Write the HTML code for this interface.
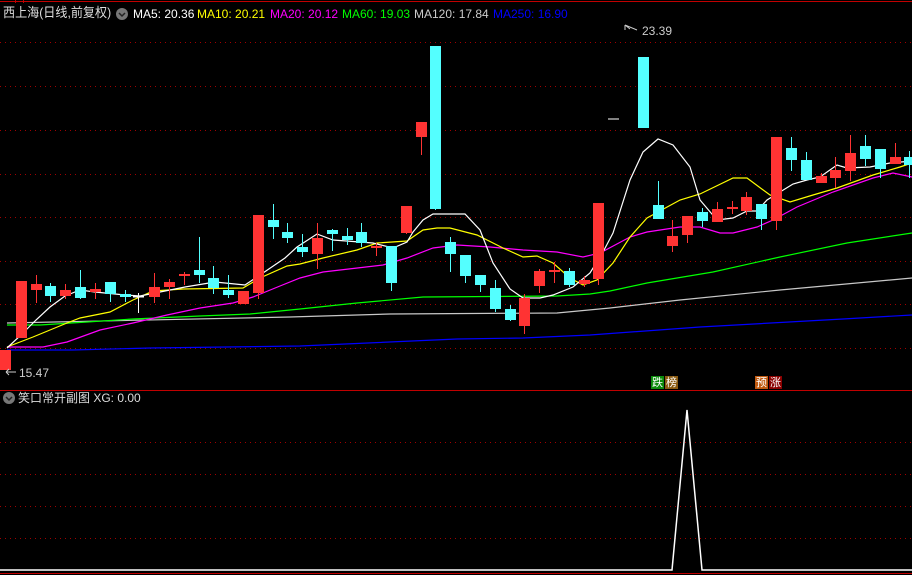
<!DOCTYPE html>
<html><head><meta charset="utf-8">
<style>
html,body{margin:0;padding:0;background:#000;width:912px;height:575px;overflow:hidden}
.t{position:absolute;font-family:"Liberation Sans","Noto Sans CJK SC",sans-serif;font-size:12px;white-space:nowrap;line-height:14px}
.b{position:absolute;width:13px;height:13px;font-family:"Noto Sans CJK SC",sans-serif;font-size:11px;line-height:13px;text-align:center;color:#fff}
</style></head><body>
<svg id="s" width="912" height="575" style="position:absolute;left:0;top:0">
<line x1="0" y1="1.5" x2="912" y2="1.5" stroke="#c00000"/>
<line x1="15.5" y1="0" x2="15.5" y2="3" stroke="#c00000"/>
<line x1="23.5" y1="0" x2="23.5" y2="3" stroke="#c00000"/>
<line x1="0" y1="390.5" x2="912" y2="390.5" stroke="#c00000"/>
<line x1="0" y1="573.5" x2="912" y2="573.5" stroke="#c00000"/>
<g id="grid" stroke="#a00000" stroke-dasharray="1,4"></g>
<g id="ma" fill="none" stroke-width="1.2"></g>
<g id="c"></g>
<circle cx="122" cy="14" r="6" fill="#777"/>
<path d="M119 13l3 3 3-3" stroke="#222" stroke-width="1.5" fill="none"/>
<circle cx="9" cy="398" r="6" fill="#777"/>
<path d="M6 397l3 3 3-3" stroke="#222" stroke-width="1.5" fill="none"/>
<polyline points="0,570 672,570 687,410 702,570 912,570" fill="none" stroke="#fff" stroke-width="1.5"/>
<line x1="608" y1="119" x2="619" y2="119" stroke="#fff"/>
<path d="M625 25l5 4M625 25l0 5M625 25l12 5" stroke="#ccc" fill="none"/>
<path d="M6 372l10 0M6 372l3-3M6 372l3 3" stroke="#ccc" fill="none"/>
</svg>
<div class="t" style="left:3px;top:6px;color:#ddd;font-size:13px;transform:scaleX(0.93);transform-origin:0 0">西上海(日线,前复权)</div>
<div class="t" style="left:133px;top:7px;color:#fff">MA5: 20.36</div>
<div class="t" style="left:197px;top:7px;color:#ffff00">MA10: 20.21</div>
<div class="t" style="left:270px;top:7px;color:#ff00ff">MA20: 20.12</div>
<div class="t" style="left:342px;top:7px;color:#00ff00">MA60: 19.03</div>
<div class="t" style="left:414px;top:7px;color:#ccc">MA120: 17.84</div>
<div class="t" style="left:493px;top:7px;color:#0000ff">MA250: 16.90</div>
<div class="t" style="left:642px;top:24px;color:#ccc">23.39</div>
<div class="t" style="left:19px;top:366px;color:#ccc">15.47</div>
<div class="t" style="left:18px;top:391px;color:#ddd;font-size:12px">笑口常开副图 <span style="font-size:12px">XG: 0.00</span></div>
<div class="b" style="left:651px;top:376px;background:#0a8a0a">跌</div>
<div class="b" style="left:665px;top:376px;background:#8a5a10">榜</div>
<div class="b" style="left:755px;top:376px;background:#c05a10">预</div>
<div class="b" style="left:769px;top:376px;background:#8a0000">涨</div>
<script>
var NS="http://www.w3.org/2000/svg";
function el(p,t,a){var e=document.createElementNS(NS,t);for(var k in a)e.setAttribute(k,a[k]);p.appendChild(e);return e;}
var g=document.getElementById("grid");
[42,86,130,174,217,261,304,348,442,474,506,538].forEach(function(y){el(g,"line",{x1:0,x2:912,y1:y+.5,y2:y+.5});});
var R="#ff3333",C="#54ffff",W="#fff";
var d=[[0,350,370,350,370,R],[16,281,338,281,338,R],[31,284,290,275,303,R],[45,286,296,283,302,C],[60,290,296,284,299,R],[75,287,298,270,299,C],[90,289,292,283,299,R],[105,282,294,282,302,C],[120,294,297,290,302,C],[133,296,297,293,313,W],[149,287,297,273,303,R],[164,282,287,279,299,R],[179,274,276,272,285,R],[194,270,275,237,283,C],[208,278,288,266,294,C],[223,290,295,275,298,C],[238,291,304,291,304,R],[253,215,293,215,299,R],[268,220,227,204,239,C],[282,232,238,223,243,C],[297,247,252,234,257,C],[312,238,254,223,269,R],[327,230,234,229,251,C],[342,236,240,228,245,C],[356,232,243,223,247,C],[371,246,248,243,256,R],[386,246,283,246,291,C],[401,206,233,206,234,R],[416,122,137,122,155,R],[430,46,209,46,210,C],[445,242,254,237,272,C],[460,255,276,255,283,C],[475,275,285,275,292,C],[490,288,309,280,312,C],[505,309,320,305,321,C],[519,298,326,294,334,R],[534,271,286,269,293,R],[549,270,272,262,283,R],[564,271,285,268,287,C],[579,280,284,276,287,R],[593,203,279,203,285,R],[638,57,128,57,128,C],[653,205,219,181,219,C],[667,236,246,220,252,R],[682,216,235,216,243,R],[697,212,221,208,227,C],[712,209,222,202,222,R],[727,207,209,201,214,R],[741,197,211,192,215,R],[756,204,219,204,230,C],[771,137,221,137,230,R],[786,148,160,137,171,C],[801,160,180,152,180,C],[816,176,183,173,183,R],[830,170,178,157,188,R],[845,153,171,135,181,R],[860,146,159,135,166,C],[875,149,169,149,178,C],[890,157,164,143,164,R],[904,157,165,151,178,C]];
var c=document.getElementById("c");
d.forEach(function(k){var x=k[0]+5.5;el(c,"line",{x1:x,x2:x,y1:k[3],y2:k[4],stroke:k[5],"stroke-width":1});
var h=Math.max(k[2]-k[1],1.5);el(c,"rect",{x:k[0],y:k[1],width:11,height:h,fill:k[5]});});
var m=document.getElementById("ma");
var L=[
["#0000ff","7,350 73,350 150,348 300,346 457,339 523,338 590,335 700,327 843,319 912,315"],
["#c8c8c8","7,323 290,317 390,314 557,313 610,308 680,300 780,290 912,278"],
["#00ff00","7,325 40,325 87,322 133,319 200,316 250,314 300,309 357,303 423,297 557,296 590,294 610,291 647,283 713,272 780,257 847,243 912,233"],
["#ff00ff","7,347 43,347 67,342 100,330 133,323 167,315 200,308 233,303 253,297 280,286 300,278 323,272 383,265 407,258 433,248 457,245 490,247 523,250 557,252 583,257 600,253 630,237 647,232 680,227 700,227 720,233 733,233 757,227 773,220 797,207 833,192 873,178 893,173 912,177"],
["#ffff00","7,347 33,337 67,323 80,318 110,312 133,300 153,291 183,289 243,288 260,278 287,266 300,264 323,258 357,250 377,243 407,241 423,230 437,228 450,228 477,235 503,248 523,257 537,256 553,263 570,278 583,285 597,280 613,263 630,237 647,218 680,200 700,194 733,178 747,178 770,195 790,202 813,195 837,188 873,175 900,167 912,163"],
["#ffffff","7,348 21,335 36,320 50,307 65,296 80,290 95,292 125,295 140,296 155,293 185,287 215,282 245,285 260,275 285,258 297,247 317,234 333,240 373,243 393,248 407,242 413,232 423,220 433,214 465,214 480,230 493,263 510,289 523,298 540,298 553,295 573,287 590,273 603,252 613,233 630,180 643,152 658,139 673,145 690,167 700,200 717,220 733,218 747,211 757,211 767,200 780,192 793,184 807,180 820,177 837,165 847,168 870,167 890,163 912,161"]];
L.forEach(function(l){el(m,"polyline",{points:l[1],stroke:l[0]});});
</script>
</body></html>
